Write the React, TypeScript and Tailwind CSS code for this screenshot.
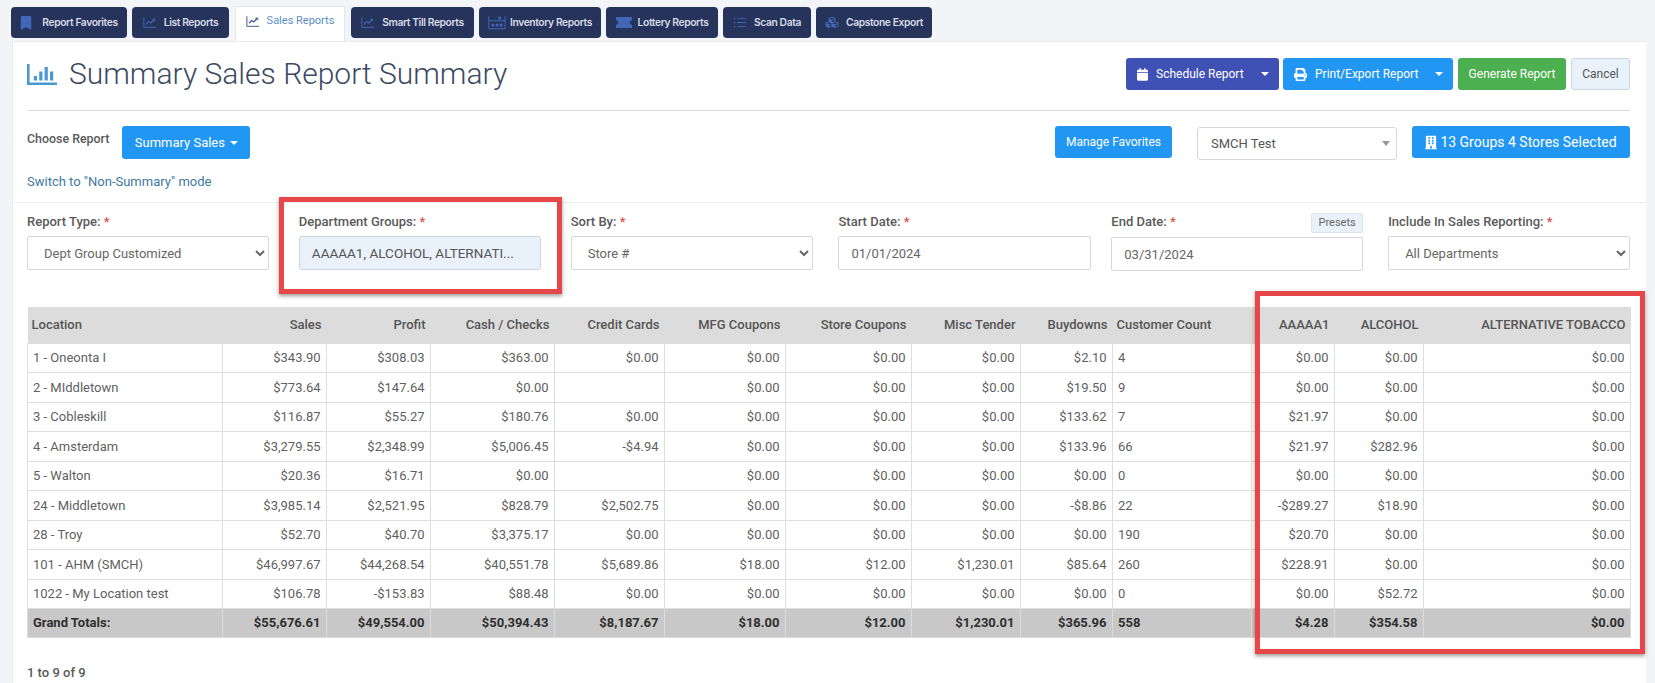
import { FaBookmark, FaCalendar, FaPrint, FaBuilding, FaCubes } from "react-icons/fa";

const ChartIcon = ({ className }: { className: string }) => (
  <svg viewBox="0 0 16 14" fill="none" stroke="currentColor" className={className}>
    <path d="M1 1v11.5h14" strokeWidth="1.1" />
    <path d="M3.5 9l3-3.2 2.4 1.8 3.6-4" strokeWidth="1.4" />
    <path d="M10.8 3h2.6v2.6" strokeWidth="1.1" />
  </svg>
);

const InventoryIcon = ({ className }: { className: string }) => (
  <svg viewBox="0 0 20 16" fill="none" stroke="currentColor" className={className}>
    <path d="M1 1v14h18V1" strokeWidth="1.1" />
    <path d="M1 6h18" strokeWidth="1.1" />
    <path d="M4 9.5h3v3H4zM8.5 9.5h3v3h-3zM13 9.5h3v3h-3z" fill="currentColor" stroke="none" />
    <path d="M11.5 1.5h3v3h-3z" fill="currentColor" stroke="none" />
  </svg>
);

const TicketIcon = ({ className }: { className: string }) => (
  <svg viewBox="0 0 16 11" fill="currentColor" className={className}>
    <path d="M0 0h16v3.2a2.3 2.3 0 0 0 0 4.6V11H0V7.8a2.3 2.3 0 0 0 0-4.6z" />
  </svg>
);

const ListIcon = ({ className }: { className: string }) => (
  <svg viewBox="0 0 16 14" fill="currentColor" className={className}>
    <path d="M0 1h2v1.6H0zM0 6.2h2v1.6H0zM0 11.4h2V13H0zM4.5 1.3H16v1H4.5zM4.5 6.5H16v1H4.5zM4.5 11.7H16v1H4.5z" />
  </svg>
);

const BarsIcon = () => (
  <svg viewBox="0 0 30 21" fill="#4a98d3" className="h-[21px] w-[30px]">
    <path d="M0 0h2.6v18.4H30V21H0z" />
    <path d="M6.8 12h3.2v4.6H6.8zM12.2 7.5h3.2v9.1h-3.2zM17.6 3h3.2v13.6h-3.2zM23 7.5h3.2v9.1H23z" />
  </svg>
);

const tabs = [
  { label: "Report Favorites", width: "w-[116px]", icon: <FaBookmark className="h-[14px] w-[12px]" />, gap: "gap-[10px]" },
  { label: "List Reports", width: "w-[97px]", icon: <ChartIcon className="h-[13px] w-[14px]" />, gap: "gap-[7px]" },
  { label: "Sales Reports", width: "w-[110px]", icon: <ChartIcon className="h-[13px] w-[14px]" />, gap: "gap-[7px]", active: true },
  { label: "Smart Till Reports", width: "w-[123px]", icon: <ChartIcon className="h-[13px] w-[14px]" />, gap: "gap-[7px]" },
  { label: "Inventory Reports", width: "w-[122px]", icon: <InventoryIcon className="h-[15px] w-[18px]" />, gap: "gap-[4px]" },
  { label: "Lottery Reports", width: "w-[112px]", icon: <TicketIcon className="h-[11px] w-[16px]" />, gap: "gap-[6px]" },
  { label: "Scan Data", width: "w-[88px]", icon: <ListIcon className="h-[11px] w-[14px]" />, gap: "gap-[7px]" },
  { label: "Capstone Export", width: "w-[116px]", icon: <FaCubes className="h-[13px] w-[14px]" />, gap: "gap-[7px]" },
];

const Caret = () => (
  <span className="inline-block h-0 w-0 border-x-[4px] border-t-[4px] border-x-transparent border-t-white" />
);

const columns = [
  { label: "Location", width: "w-[195px]", align: "text-left" },
  { label: "Sales", width: "w-[104px]", align: "text-right" },
  { label: "Profit", width: "w-[104px]", align: "text-right" },
  { label: "Cash / Checks", width: "w-[124px]", align: "text-right" },
  { label: "Credit Cards", width: "w-[110px]", align: "text-right" },
  { label: "MFG Coupons", width: "w-[121px]", align: "text-right" },
  { label: "Store Coupons", width: "w-[126px]", align: "text-right" },
  { label: "Misc Tender", width: "w-[109px]", align: "text-right" },
  { label: "Buydowns", width: "w-[92px]", align: "text-right" },
  { label: "Customer Count", width: "w-[139px]", align: "text-left" },
  { label: "AAAAA1", width: "w-[83px]", align: "text-right" },
  { label: "ALCOHOL", width: "w-[89px]", align: "text-right" },
  { label: "ALTERNATIVE TOBACCO", width: "w-[207px]", align: "text-right" },
];

const rows = [
  ["1 - Oneonta I", "$343.90", "$308.03", "$363.00", "$0.00", "$0.00", "$0.00", "$0.00", "$2.10", "4", "$0.00", "$0.00", "$0.00"],
  ["2 - MIddletown", "$773.64", "$147.64", "$0.00", "", "$0.00", "$0.00", "$0.00", "$19.50", "9", "$0.00", "$0.00", "$0.00"],
  ["3 - Cobleskill", "$116.87", "$55.27", "$180.76", "$0.00", "$0.00", "$0.00", "$0.00", "$133.62", "7", "$21.97", "$0.00", "$0.00"],
  ["4 - Amsterdam", "$3,279.55", "$2,348.99", "$5,006.45", "-$4.94", "$0.00", "$0.00", "$0.00", "$133.96", "66", "$21.97", "$282.96", "$0.00"],
  ["5 - Walton", "$20.36", "$16.71", "$0.00", "", "$0.00", "$0.00", "$0.00", "$0.00", "0", "$0.00", "$0.00", "$0.00"],
  ["24 - Middletown", "$3,985.14", "$2,521.95", "$828.79", "$2,502.75", "$0.00", "$0.00", "$0.00", "-$8.86", "22", "-$289.27", "$18.90", "$0.00"],
  ["28 - Troy", "$52.70", "$40.70", "$3,375.17", "$0.00", "$0.00", "$0.00", "$0.00", "$0.00", "190", "$20.70", "$0.00", "$0.00"],
  ["101 - AHM (SMCH)", "$46,997.67", "$44,268.54", "$40,551.78", "$5,689.86", "$18.00", "$12.00", "$1,230.01", "$85.64", "260", "$228.91", "$0.00", "$0.00"],
  ["1022 - My Location test", "$106.78", "-$153.83", "$88.48", "$0.00", "$0.00", "$0.00", "$0.00", "$0.00", "0", "$0.00", "$52.72", "$0.00"],
];

const totals = ["Grand Totals:", "$55,676.61", "$49,554.00", "$50,394.43", "$8,187.67", "$18.00", "$12.00", "$1,230.01", "$365.96", "558", "$4.28", "$354.58", "$0.00"];

const Label = ({ text }: { text: string }) => (
  <span className="-mt-px block text-[13px] font-medium leading-[16px] text-[#5a5a5a]">
    {text} <span className="text-[#d9534f]">*</span>
  </span>
);

const NativeSelect = ({ value }: { value: string }) => (
  <select
    defaultValue={value}
    className="h-[34px] w-full rounded-[2px] border border-[#d4d8dd] bg-white pl-[12px] pr-[6px] text-[13px] text-[#666]"
  >
    <option>{value}</option>
  </select>
);

const DateInput = ({ value }: { value: string }) => (
  <input
    readOnly
    value={value}
    className="h-[34px] w-full rounded-[2px] border border-[#d4d8dd] bg-white px-[12px] text-[13px] text-[#666]"
  />
);

export default function App() {
  return (
    <div className="relative h-[683px] overflow-hidden bg-[#f3f4f8] font-['Roboto',sans-serif]">
      <div className="flex h-[41px] gap-[5px] pl-[11px] pt-[7px]">
        {tabs.map((tab) =>
          tab.active ? (
            <div
              key={tab.label}
              className={`relative z-10 mx-px -mt-px flex h-[35px] items-center justify-center border border-b-0 border-[#e3e6ec] bg-white pb-[6px] text-[11px] text-[#5b8fc7] ${tab.width} ${tab.gap}`}
            >
              <span className="text-[#3c5a94]">{tab.icon}</span>
              {tab.label}
            </div>
          ) : (
            <div
              key={tab.label}
              className={`flex h-[31px] items-center justify-center rounded-[4px] bg-[#26335a] font-['Inter',sans-serif] text-[10.3px] font-semibold tracking-[-0.4px] text-[#d5dae6] ${tab.width} ${tab.gap}`}
            >
              <span className="text-[#4267b8]">{tab.icon}</span>
              {tab.label}
            </div>
          )
        )}
      </div>

      <div className="ml-[12px] mr-[9px] h-[642px] border-l border-t border-[#e9ebf0] bg-white">
        <div className="pl-[14px] pr-[16px]">
          <div className="flex h-[48px] items-start justify-between pt-[16px]">
            <div className="flex items-center gap-[12px] pt-[5px]">
              <BarsIcon />
              <h1 className="text-[30px] font-light leading-[22px] text-[#3c4a62]">Summary Sales Report Summary</h1>
            </div>
            <div className="flex items-center">
              <button className="flex h-[32px] w-[153px] items-center justify-between rounded-[3px] bg-[#3f51b5] pl-[11px] pr-[10px] text-[12px] text-white">
                <span className="flex items-center gap-[8px]">
                  <FaCalendar className="h-[13px] w-[11px]" />
                  Schedule Report
                </span>
                <Caret />
              </button>
              <button className="ml-[4px] flex h-[32px] w-[170px] items-center justify-between rounded-[3px] bg-[#2196f3] pl-[11px] pr-[10px] text-[12px] text-white">
                <span className="flex items-center gap-[8px]">
                  <FaPrint className="h-[13px] w-[13px]" />
                  Print/Export Report
                </span>
                <Caret />
              </button>
              <button className="ml-[5px] h-[32px] w-[108px] rounded-[3px] bg-[#4caf50] text-[12px] text-white">Generate Report</button>
              <button className="ml-[5px] h-[32px] w-[59px] rounded-[3px] border border-[#cdd4dd] bg-[#e9f1fb] text-[12px] text-[#555]">Cancel</button>
            </div>
          </div>

          <div className="mt-[20px] border-t border-[#dedede]" />

          <div className="mt-[15px] flex items-start justify-between">
            <div>
              <div className="flex items-start">
                <span className="pt-[5px] text-[12.4px] font-medium leading-[16px] text-[#5a5a5a]">Choose Report</span>
                <button className="ml-[13px] flex h-[33px] w-[128px] items-center justify-center gap-[5px] rounded-[3px] bg-[#2196f3] text-[13px] text-white">
                  Summary Sales
                  <Caret />
                </button>
              </div>
              <a className="mt-[15px] block text-[13px] leading-[16px] text-[#41799f]">Switch to "Non-Summary" mode</a>
            </div>
            <div className="flex items-start">
              <button className="h-[32px] w-[117px] rounded-[3px] bg-[#2196f3] text-[12px] text-white">Manage Favorites</button>
              <div className="ml-[25px] mt-px flex h-[33px] w-[200px] items-center justify-between rounded-[3px] border border-[#d4d8dd] bg-white pl-[13px] pr-[6px] text-[13px] text-[#555]">
                SMCH Test
                <span className="h-0 w-0 border-x-[4px] border-t-[5px] border-x-transparent border-t-[#999]" />
              </div>
              <button className="ml-[15px] flex h-[32px] w-[218px] items-center justify-center gap-[3px] rounded-[3px] bg-[#2196f3] text-[14px] text-white">
                <FaBuilding className="h-[15px] w-[12px]" />
                13 Groups 4 Stores Selected
              </button>
            </div>
          </div>
        </div>

        <div className="mt-[12px] border-t border-[#eceef1]" />

        <div className="pl-[14px] pr-[16px]">
          <div className="mt-[12px] flex">
            <div className="w-[242px]">
              <div className="h-[22px]"><Label text="Report Type:" /></div>
              <NativeSelect value="Dept Group Customized" />
            </div>
            <div className="ml-[30px] w-[242px]">
              <div className="h-[22px]"><Label text="Department Groups:" /></div>
              <div className="flex h-[34px] items-center rounded-[3px] border border-[#cdd4dd] bg-[#e9f1fb] px-[12px] text-[13.5px] text-[#555]">
                AAAAA1, ALCOHOL, ALTERNATI...
              </div>
            </div>
            <div className="ml-[30px] w-[243px]">
              <div className="h-[22px]"><Label text="Sort By:" /></div>
              <NativeSelect value="Store #" />
            </div>
            <div className="ml-[25px] w-[253px]">
              <div className="h-[22px]"><Label text="Start Date:" /></div>
              <DateInput value="01/01/2024" />
            </div>
            <div className="ml-[20px] w-[252px]">
              <div className="flex h-[22px] items-start justify-between">
                <Label text="End Date:" />
                <span className="-mt-[2px] flex h-[20px] w-[52px] items-center justify-center rounded-[2px] border border-[#dbe3ee] bg-[#e9f1fb] text-[11px] text-[#666]">Presets</span>
              </div>
              <DateInput value="03/31/2024" />
            </div>
            <div className="ml-[25px] w-[242px]">
              <div className="h-[22px]"><Label text="Include In Sales Reporting:" /></div>
              <NativeSelect value="All Departments" />
            </div>
          </div>

          <table className="mt-[36px] w-[1603px] table-fixed border-collapse text-[13px] text-[#5f5f5f]">
            <colgroup>
              {columns.map((col) => (
                <col key={col.label} className={col.width} />
              ))}
            </colgroup>
            <thead>
              <tr className="h-[36px] bg-[#dcdcdc] text-[#555]">
                {columns.map((col) => (
                  <th key={col.label} className={`pl-[4px] pr-[5px] font-medium ${col.align} whitespace-nowrap`}>{col.label}</th>
                ))}
              </tr>
            </thead>
            <tbody>
              {rows.map((row) => (
                <tr key={row[0]} className="h-[29.5px]">
                  {row.map((cell, i) => (
                    <td key={i} className={`border border-[#dedede] pl-[5px] pr-[5.5px] ${columns[i].align}`}>{cell}</td>
                  ))}
                </tr>
              ))}
              <tr className="h-[29px] bg-[#c8c8c8] font-bold text-[#2f2f2f]">
                {totals.map((cell, i) => (
                  <td key={i} className={`border border-[#dcdcdc] pl-[5px] pr-[5.5px] ${columns[i].align}`}>{cell}</td>
                ))}
              </tr>
            </tbody>
          </table>

          <p className="mt-[27px] text-[13px] font-medium leading-[16px] text-[#5a5a5a]">1 to 9 of 9</p>
        </div>
      </div>

      {/* annotation boxes drawn over the screenshot */}
      <div className="absolute left-[279px] top-[197px] h-[97px] w-[283px] border-[5px] border-[#e8474a] shadow-[0_2px_4px_rgba(0,0,0,0.4)]" />
      <div className="absolute left-[1255px] top-[291px] h-[363px] w-[390px] border-[5px] border-[#e8474a] shadow-[0_2px_4px_rgba(0,0,0,0.4)]" />
    </div>
  );
}
